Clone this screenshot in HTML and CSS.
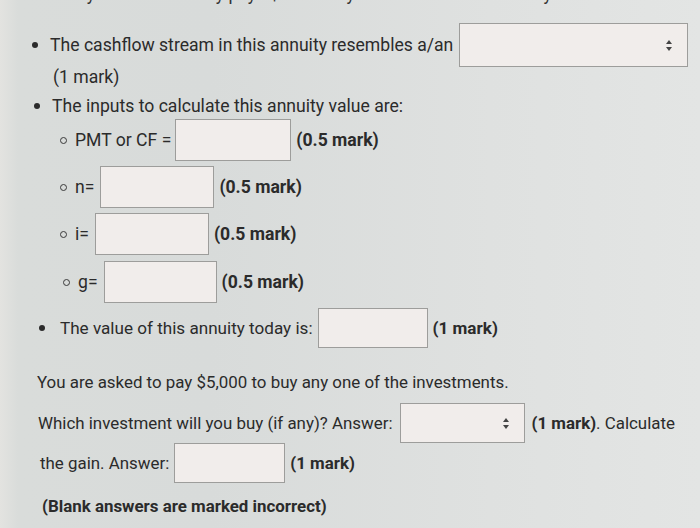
FILE: index.html
```html
<!DOCTYPE html>
<html>
<head>
<meta charset="utf-8">
<link rel="stylesheet" href="styles.css">
</head>
<body>
<div class="page">
  <div class="cut">Annuity 2 &ndash; This annuity pays $100 every month in advance for 4 year.</div>

  <div class="row r1">
    <span class="dot"></span>
    <span class="txt">The cashflow stream in this annuity resembles a/an</span>
    <span class="select s1"><span class="arrows"></span></span>
  </div>
  <div class="row r1b"><span class="txt">(1 mark)</span></div>

  <div class="row r2">
    <span class="dot"></span>
    <span class="txt">The inputs to calculate this annuity value are:</span>
  </div>

  <div class="row sub sub1">
    <span class="ring"></span>
    <span class="txt">PMT or CF =</span>
    <span class="box b-pmt"></span>
    <b class="mark">(0.5 mark)</b>
  </div>
  <div class="row sub sub2">
    <span class="ring"></span>
    <span class="txt">n=</span>
    <span class="box b-n"></span>
    <b class="mark">(0.5 mark)</b>
  </div>
  <div class="row sub sub3">
    <span class="ring"></span>
    <span class="txt">i=</span>
    <span class="box b-i"></span>
    <b class="mark">(0.5 mark)</b>
  </div>
  <div class="row sub sub4">
    <span class="ring"></span>
    <span class="txt">g=</span>
    <span class="box b-g"></span>
    <b class="mark">(0.5 mark)</b>
  </div>

  <div class="row r3">
    <span class="dot"></span>
    <span class="txt">The value of this annuity today is:</span>
    <span class="box b-val"></span>
    <b class="mark">(1 mark)</b>
  </div>

  <div class="lower">
    <div class="row p1"><span class="txt">You are asked to pay $5,000 to buy any one of the investments.</span></div>

    <div class="row p2">
      <span class="txt">Which investment will you buy (if any)? Answer:</span>
      <span class="select s2"><span class="arrows"></span></span>
      <span class="txt"><b>(1 mark)</b>. Calculate</span>
    </div>

    <div class="row p3">
      <span class="txt">the gain. Answer:</span>
      <span class="box b-gain"></span>
      <b class="mark">(1 mark)</b>
    </div>

    <div class="row p4"><b class="txt">(Blank answers are marked incorrect)</b></div>
  </div>
</div>
</body>
</html>
```

FILE: styles.css
```css
html, body {
  margin: 0;
  padding: 0;
}
body {
  width: 700px;
  height: 528px;
  overflow: hidden;
  background: linear-gradient(90deg, #e3e3e0 0px, #d9dcda 18px, #d8dbda 30%, #dfe1e0 70%, #e3e5e4 100%);
  font-family: Roboto, "Liberation Sans", sans-serif;
  color: #2b2b2b;
  font-size: 17.6px;
}
.page {
  position: relative;
  height: 528px;
  display: flex;
  flex-direction: column;
}
.cut {
  height: 20px;
  margin-top: -16px;
  line-height: 20px;
  padding-left: 36px;
  white-space: nowrap;
  color: #333;
}
.row {
  display: flex;
  align-items: center;
  white-space: nowrap;
}
.dot {
  width: 6px;
  height: 6px;
  border-radius: 50%;
  background: #2b2b2b;
  margin-right: 12px;
  flex: none;
}
.ring {
  width: 5px;
  height: 5px;
  border-radius: 50%;
  border: 1.3px solid #3a3a3a;
  margin-right: 8px;
  flex: none;
}
.box, .select {
  display: inline-block;
  background: #f1edeb;
  border: 1.5px solid #9d9d9b;
  box-sizing: border-box;
  flex: none;
}
.select {
  position: relative;
}
.arrows {
  position: absolute;
  right: 14px;
  top: 50%;
  width: 7px;
  height: 11px;
  margin-top: -5px;
}
.arrows::before, .arrows::after {
  content: "";
  position: absolute;
  left: 0;
  border-left: 3.5px solid transparent;
  border-right: 3.5px solid transparent;
}
.arrows::before {
  top: 0;
  border-bottom: 4px solid #444;
}
.arrows::after {
  bottom: 0;
  border-top: 4px solid #444;
}
.mark {
  margin-left: 5px;
}

.r1 { margin-top: 19px; height: 44px; padding-left: 32px; }
.s1 { width: 229px; height: 44px; margin-left: 6px; }
.r1b { height: 22px; margin-top: -1px; padding-left: 53px; }
.r2 { height: 22px; margin-top: 7px; padding-left: 34px; }

.sub { height: 42px; padding-left: 60px; }
.sub1 { margin-top: 2px; }
.sub2 { margin-top: 5px; }
.sub3 { margin-top: 5px; }
.sub4 { margin-top: 6px; padding-left: 63px; }
.box { height: 42px; }
.b-pmt { width: 116px; margin-left: 4px; }
.b-n { width: 114px; margin-left: 6px; }
.b-i { width: 114px; margin-left: 6px; }
.b-g { width: 113px; margin-left: 6px; }

.r3 { height: 40px; margin-top: 5px; padding-left: 39px; font-size: 17.1px; }
.r3 .dot { margin-right: 15px; }
.b-val { width: 110px; height: 40px; margin-left: 5px; }

.lower { font-size: 16.9px; display: flex; flex-direction: column; }
.p1 { height: 22px; margin-top: 23px; padding-left: 37px; }
.p2 { height: 40px; margin-top: 10px; padding-left: 38px; }
.s2 { width: 125px; height: 40px; margin-left: 8px; margin-right: 6px; }
.p3 { height: 40px; margin-top: 0px; padding-left: 40px; }
.b-gain { width: 111px; height: 40px; margin-left: 5px; }
.p4 { height: 22px; margin-top: 12px; padding-left: 42px; }
```
